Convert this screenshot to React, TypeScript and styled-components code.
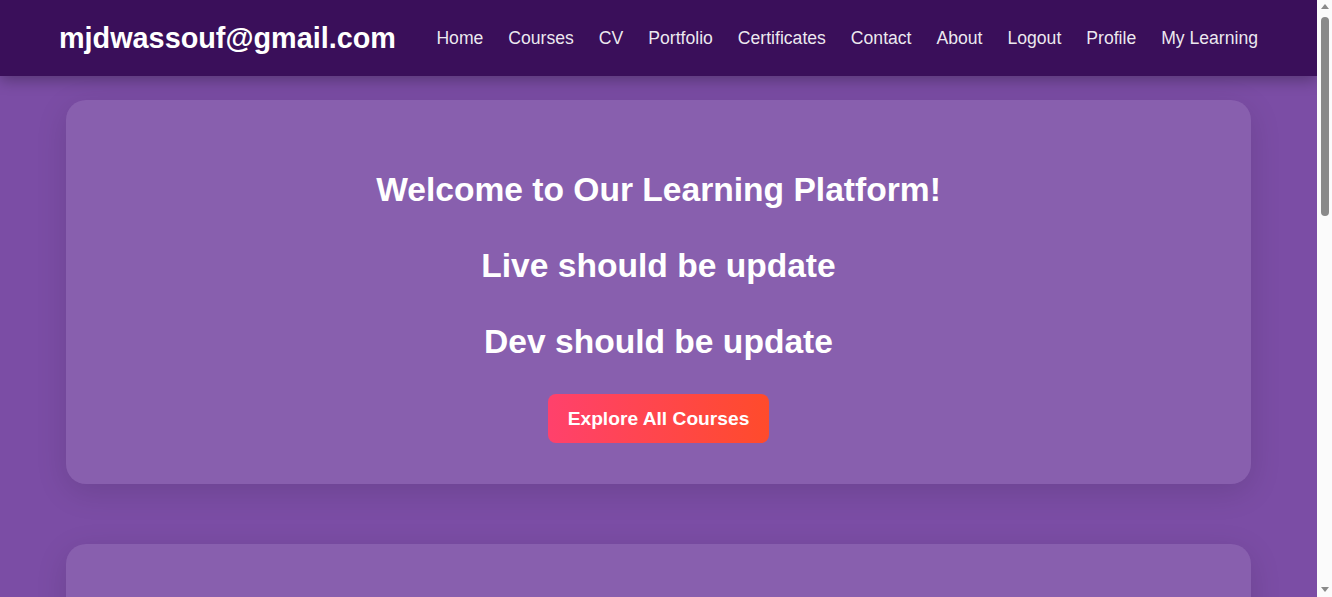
import React from "react";
import styled, { createGlobalStyle } from "styled-components";

const GlobalStyle = createGlobalStyle`
  * { box-sizing: border-box; }
  html, body { margin: 0; padding: 0; height: 100%; overflow: hidden; }
  body {
    font-family: "Liberation Sans", Arial, sans-serif;
    background: #7b4da5;
    color: #ffffff;
  }
`;

const Shell = styled.div`
  display: flex;
  height: 100vh;
  overflow: hidden;
`;

const Page = styled.div`
  flex: 1;
  min-width: 0;
  height: 100vh;
  overflow: hidden;
  background: #7b4da5;
`;

const ScrollBar = styled.div`
  width: 15px;
  flex: none;
  height: 100vh;
  background: #fbfbfb;
  display: flex;
  flex-direction: column;
  align-items: center;
  padding: 4px 0 5px;
`;

const Arrow = styled.div<{ $down?: boolean }>`
  width: 0;
  height: 0;
  border-left: 4.5px solid transparent;
  border-right: 4.5px solid transparent;
  ${(p) =>
    p.$down
      ? "border-top: 5px solid #8a8a8a; margin-top: auto;"
      : "border-bottom: 5px solid #8a8a8a;"}
`;

const Thumb = styled.div`
  width: 8px;
  height: 199px;
  margin-top: 8px;
  margin-left: 1px;
  border-radius: 4px;
  background: #8a8a8a;
`;

const NavBar = styled.nav`
  height: 76px;
  background: #3a0f5a;
  display: flex;
  align-items: center;
  justify-content: space-between;
  padding: 0 59px;
  box-shadow: 0 4px 14px rgba(0, 0, 0, 0.3);
  position: relative;
  z-index: 1;
`;

const Logo = styled.div`
  font-size: 28.8px;
  font-weight: 700;
  color: #ffffff;
`;

const NavLinks = styled.ul`
  list-style: none;
  margin: 0;
  padding: 0;
  display: flex;
  gap: 25px;
`;

const NavLink = styled.a`
  font-size: 17.6px;
  color: rgba(255, 255, 255, 0.92);
  text-decoration: none;
  cursor: pointer;
`;

const Main = styled.main`
  width: 90%;
  margin: 0 auto;
  padding: 24px 0 60px;
  display: flex;
  flex-direction: column;
  gap: 60px;
`;

const Card = styled.section<{ $tall?: boolean }>`
  background: rgba(255, 255, 255, 0.1);
  border-radius: 20px;
  box-shadow: 0 8px 32px rgba(0, 0, 0, 0.12);
  padding: 70px 20px 41px;
  display: flex;
  flex-direction: column;
  align-items: center;
  gap: 36px;
  min-height: ${(p) => (p.$tall ? "1100px" : "auto")};
`;

const Heading = styled.h2`
  margin: 0;
  font-size: 33.6px;
  line-height: 40px;
  font-weight: 700;
  text-align: center;
  color: #ffffff;
`;

const CTA = styled.button`
  margin-top: -4px;
  border: none;
  border-radius: 8px;
  padding: 13px 20px;
  font-family: inherit;
  font-size: 19.2px;
  line-height: 23px;
  font-weight: 700;
  color: #ffffff;
  background: linear-gradient(90deg, #ff416c, #ff4b2b);
  cursor: pointer;
`;

const links = [
  "Home",
  "Courses",
  "CV",
  "Portfolio",
  "Certificates",
  "Contact",
  "About",
  "Logout",
  "Profile",
  "My Learning",
];

export default function App() {
  return (
    <>
      <GlobalStyle />
      <Shell>
        <Page>
          <NavBar>
            <Logo>mjdwassouf@gmail.com</Logo>
            <NavLinks>
              {links.map((l) => (
                <li key={l}>
                  <NavLink>{l}</NavLink>
                </li>
              ))}
            </NavLinks>
          </NavBar>
          <Main>
            <Card>
              <Heading>Welcome to Our Learning Platform!</Heading>
              <Heading>Live should be update</Heading>
              <Heading>Dev should be update</Heading>
              <CTA>Explore All Courses</CTA>
            </Card>
            <Card $tall />
          </Main>
        </Page>
        <ScrollBar>
          <Arrow />
          <Thumb />
          <Arrow $down />
        </ScrollBar>
      </Shell>
    </>
  );
}
